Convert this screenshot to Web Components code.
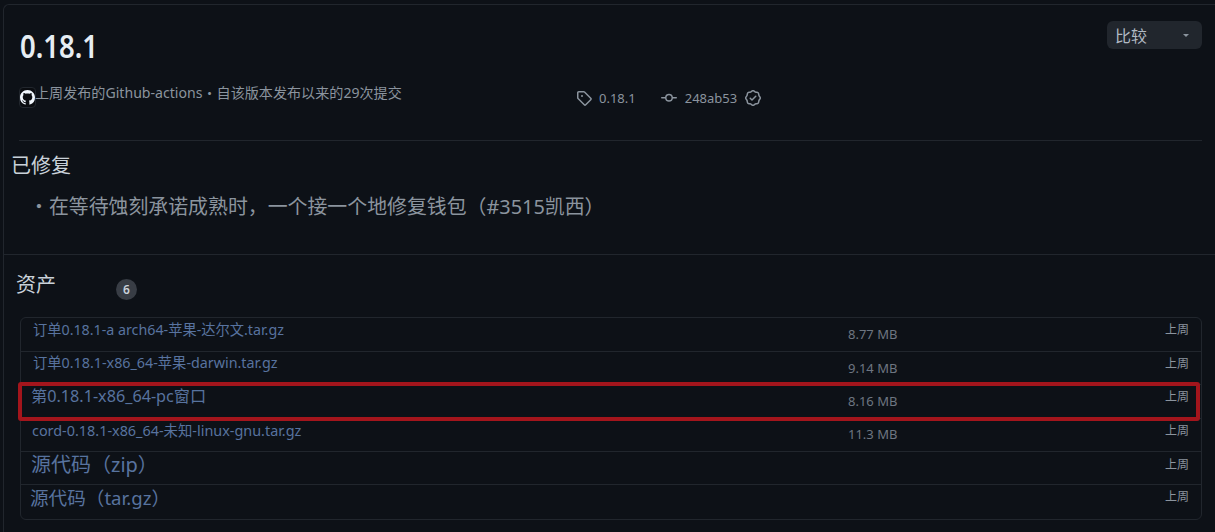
<!DOCTYPE html>
<html lang="zh">
<head>
<meta charset="utf-8">
<title>0.18.1</title>
<style>
  html, body { margin: 0; background: #0d1117; }
  body {
    padding: 4px 0 0 3px;
    height: 532px;
    overflow: hidden;
    box-sizing: border-box;
    font-family: "Noto Sans", "Noto Sans CJK SC", sans-serif;
    color: #c9d1d9;
  }
</style>
</head>
<body>
<release-card>
  <release-header></release-header>
  <release-notes></release-notes>
  <asset-list count="6">
    <asset-row name="订单0.18.1-a arch64-苹果-达尔文.tar.gz" size="8.77 MB" left="12" lift="5" when-lift="5" font="14.25"></asset-row>
    <asset-row name="订单0.18.1-x86_64-苹果-darwin.tar.gz" size="9.14 MB" left="12" lift="5" when-lift="4" font="14.3"></asset-row>
    <asset-row name="第0.18.1-x86_64-pc窗口" size="8.16 MB" left="10" lift="5" when-lift="4" font="16.2" marked></asset-row>
    <asset-row name="cord-0.18.1-x86_64-未知-linux-gnu.tar.gz" size="11.3 MB" left="11" lift="4" when-lift="4" font="14.4"></asset-row>
    <asset-row name="源代码（zip）" left="10" lift="3" when-lift="3" font="20"></asset-row>
    <asset-row name="源代码（tar.gz）" left="9" lift="3" when-lift="4" font="18.6"></asset-row>
  </asset-list>
</release-card>

<script>
const FONT = `"Noto Sans", "Noto Sans CJK SC", sans-serif`;

class ReleaseCard extends HTMLElement {
    constructor() {
        super();
        this.attachShadow({ mode: "open" });
        this.shadowRoot.innerHTML = /*html*/`
      <style>
        :host {
          display: block;
          height: 528px;
          box-sizing: border-box;
          border: 1px solid #21262d;
          border-right: 0;
          border-bottom: 0;
          border-top-left-radius: 6px;
          background: #0d1117;
          font-family: ${FONT};
        }
      </style>
      <slot></slot>
    `;
    }
}
customElements.define("release-card", ReleaseCard);

class ReleaseHeader extends HTMLElement {
    constructor() {
        super();
        this.attachShadow({ mode: "open" });
        this.shadowRoot.innerHTML = /*html*/`
      <style>
        :host {
          display: block;
          height: 135px;
          margin-left: 15px;
          margin-right: 13px;
          border-bottom: 1px solid #21262d;
        }
        .top {
          display: flex;
          justify-content: space-between;
          align-items: flex-start;
          padding-top: 20px;
        }
        h1 {
          margin: -1px 0 1px 1px;
          font-size: 27.5px;
          line-height: 44px;
          font-weight: 600;
          color: #e6edf3;
          transform: scaleY(1.15);
        }
        .compare {
          display: flex;
          justify-content: space-between;
          align-items: center;
          width: 95px;
          height: 28px;
          margin-top: -4px;
          padding: 0 13px 0 8px;
          box-sizing: border-box;
          border-radius: 6px;
          background: #21262d;
          color: #b1bac4;
          font-size: 16px;
        }
        .caret {
          width: 0; height: 0;
          border: 3.5px solid transparent;
          border-top-color: #8b949e;
          border-bottom: 0;
        }
        .meta {
          display: flex;
          align-items: center;
          margin-top: 11px;
          height: 36px;
          font-size: 14px;
          color: #8b949e;
        }
        .who {
          display: flex;
          align-items: flex-start;
          width: 557px;
          flex: none;
        }
        .who span { margin-top: -5px; margin-left: -1px; font-size: 14.1px; line-height: 20px; white-space: nowrap; }
        .avatar {
          flex: none;
          width: 17px;
          height: 21px;
          box-sizing: border-box;
          border: 1px solid #21262d;
          border-radius: 4px;
          margin-top: -1px;
          display: flex;
          align-items: center;
          justify-content: center;
          background: #0a0c10;
        }
        .avatar svg { fill: #f0f6fc; }
        .tags {
          display: flex;
          align-items: center;
          font-size: 13px;
          color: #8b949e;
        }
        .tags svg { flex: none; fill: #8b949e; }
      </style>
      <div class="top">
        <h1>0.18.1</h1>
        <div class="compare">比较<i class="caret"></i></div>
      </div>
      <div class="meta">
        <div class="who">
          <div class="avatar">
            <svg width="15" height="15" viewBox="0 0 16 16"><path d="M8 0c4.42 0 8 3.58 8 8a8.013 8.013 0 0 1-5.45 7.59c-.4.08-.55-.17-.55-.38 0-.27.01-1.13.01-2.2 0-.75-.25-1.23-.54-1.48 1.78-.2 3.65-.88 3.65-3.95 0-.88-.31-1.59-.82-2.15.08-.2.36-1.02-.08-2.12 0 0-.67-.22-2.2.82-.64-.18-1.32-.27-2-.27-.68 0-1.36.09-2 .27-1.53-1.03-2.2-.82-2.2-.82-.44 1.1-.16 1.92-.08 2.12-.51.56-.82 1.28-.82 2.15 0 3.06 1.86 3.75 3.64 3.95-.23.2-.44.55-.51 1.07-.46.21-1.61.55-2.33-.66-.15-.24-.6-.83-1.23-.82-.67.01-.27.38.01.53.34.19.73.9.82 1.13.16.45.68 1.31 2.69.94 0 .67.01 1.3.01 1.49 0 .21-.15.45-.55.38A7.995 7.995 0 0 1 0 8c0-4.42 3.58-8 8-8Z"/></svg>
          </div>
          <span>上周发布的Github-actions・自该版本发布以来的29次提交</span>
        </div>
        <div class="tags">
          <svg width="16" height="16" viewBox="0 0 16 16" style="margin-right:7px"><path d="M1 7.775V2.75C1 1.784 1.784 1 2.75 1h5.025c.464 0 .91.184 1.238.513l6.25 6.25a1.75 1.75 0 0 1 0 2.474l-5.026 5.026a1.75 1.75 0 0 1-2.474 0l-6.25-6.25A1.75 1.75 0 0 1 1 7.775Zm1.5 0c0 .066.026.13.073.177l6.25 6.25a.25.25 0 0 0 .354 0l5.025-5.025a.25.25 0 0 0 0-.354l-6.25-6.25a.25.25 0 0 0-.177-.073H2.75a.25.25 0 0 0-.25.25ZM6 5a1 1 0 1 1 0 2 1 1 0 0 1 0-2Z"/></svg>
          <span>0.18.1</span>
          <svg width="16" height="16" viewBox="0 0 16 16" style="margin:0 8px 0 25px"><path d="M11.93 8.5a4.002 4.002 0 0 1-7.86 0H.75a.75.75 0 0 1 0-1.5h3.32a4.002 4.002 0 0 1 7.86 0h3.32a.75.75 0 0 1 0 1.5Zm-1.43-.75a2.5 2.5 0 1 0-5 0 2.5 2.5 0 0 0 5 0Z"/></svg>
          <span>248ab53</span>
          <svg width="16" height="16" viewBox="0 0 16 16" style="margin-left:8px"><path d="M9.585.52a2.678 2.678 0 0 0-3.17 0l-.928.68a1.178 1.178 0 0 1-.518.215L3.83 1.59a2.678 2.678 0 0 0-2.24 2.24l-.175 1.14a1.178 1.178 0 0 1-.215.518l-.68.928a2.678 2.678 0 0 0 0 3.17l.68.928c.113.153.186.33.215.518l.175 1.138a2.678 2.678 0 0 0 2.24 2.24l1.138.175c.187.029.365.102.518.215l.928.68a2.678 2.678 0 0 0 3.17 0l.928-.68a1.17 1.17 0 0 1 .518-.215l1.138-.175a2.678 2.678 0 0 0 2.241-2.241l.175-1.138c.029-.187.102-.365.215-.518l.68-.928a2.678 2.678 0 0 0 0-3.17l-.68-.928a1.179 1.179 0 0 1-.215-.518L14.41 3.83a2.678 2.678 0 0 0-2.24-2.24l-1.138-.175a1.179 1.179 0 0 1-.518-.215ZM7.303 1.728c.415-.305.98-.305 1.394 0l.928.68c.348.256.752.423 1.18.489l1.136.174c.51.078.909.478.987.987l.174 1.137c.066.427.233.831.489 1.18l.68.927c.305.415.305.98 0 1.394l-.68.928a2.678 2.678 0 0 0-.489 1.18l-.174 1.136a1.178 1.178 0 0 1-.987.987l-1.137.174a2.678 2.678 0 0 0-1.18.489l-.927.68c-.415.305-.98.305-1.394 0l-.928-.68a2.678 2.678 0 0 0-1.18-.489l-1.136-.174a1.178 1.178 0 0 1-.987-.987l-.174-1.137a2.678 2.678 0 0 0-.489-1.18l-.68-.927a1.178 1.178 0 0 1 0-1.394l.68-.928c.256-.348.423-.752.489-1.18l.174-1.136c.078-.51.478-.909.987-.987l1.137-.174a2.678 2.678 0 0 0 1.18-.489ZM11.28 6.78a.75.75 0 0 0-1.06-1.06L7 8.94 5.78 7.72a.75.75 0 0 0-1.06 1.06l1.75 1.75a.75.75 0 0 0 1.06 0Z"/></svg>
        </div>
      </div>
    `;
    }
}
customElements.define("release-header", ReleaseHeader);

class ReleaseNotes extends HTMLElement {
    constructor() {
        super();
        this.attachShadow({ mode: "open" });
        this.shadowRoot.innerHTML = /*html*/`
      <style>
        :host {
          display: block;
          height: 103px;
          padding: 10px 0 0 7px;
          border-bottom: 1px solid #21262d;
        }
        h2 {
          margin: 0;
          font-size: 20px;
          line-height: 30px;
          font-weight: 400;
          color: #c9d1d9;
        }
        p {
          margin: 12px 0 0 18px;
          font-size: 19.9px;
          line-height: 28px;
          color: #8b949e;
          white-space: nowrap;
        }
      </style>
      <h2>已修复</h2>
      <p>・在等待蚀刻承诺成熟时，一个接一个地修复钱包（#3515凯西）</p>
    `;
    }
}
customElements.define("release-notes", ReleaseNotes);

class AssetList extends HTMLElement {
    constructor() {
        super();
        this.attachShadow({ mode: "open" });
        this.shadowRoot.innerHTML = /*html*/`
      <style>
        :host {
          display: block;
          padding: 14px 0 0 16px;
        }
        .title {
          display: flex;
          align-items: center;
          height: 33px;
          margin-left: -4px;
          color: #c9d1d9;
          font-size: 20px;
        }
        .title span { margin-top: -4px; }
        .count {
          width: 21px;
          height: 21px;
          margin-top: 8px;
          margin-left: 60px;
          border-radius: 50%;
          background: #383d45;
          color: #c9d1d9;
          font-size: 12px;
          font-weight: 600;
          text-align: center;
          line-height: 21px;
        }
        .box {
          width: 1182px;
          height: 203px;
          margin-top: 15px;
          box-sizing: border-box;
          border: 1px solid #21262d;
          border-radius: 6px;
        }
      </style>
      <div class="title"><span>资产</span><div class="count"></div></div>
      <div class="box"><slot></slot></div>
    `;
    }

    connectedCallback() {
        this.shadowRoot.querySelector(".count").textContent = this.getAttribute("count");
    }
}
customElements.define("asset-list", AssetList);

class AssetRow extends HTMLElement {
    constructor() {
        super();
        this.attachShadow({ mode: "open" });
        this.shadowRoot.innerHTML = /*html*/`
      <style>
        :host {
          display: block;
          position: relative;
          height: 33.2px;
          box-sizing: border-box;
          border-top: 1px solid #21262d;
        }
        :host(:first-child) { border-top: 0; }
        .row {
          display: grid;
          grid-template-columns: 827px 1fr auto;
          grid-template-rows: 100%;
          align-items: center;
          height: 100%;
          padding-right: 12px;
        }
        .name {
          color: #58739f;
          line-height: 20px;
          white-space: nowrap;
        }
        .size { color: #6e7681; font-size: 13px; line-height: 18px; margin-bottom: 1px; }
        .when { color: #8b949e; font-size: 12px; line-height: 18px; }
        .mark {
          position: absolute;
          left: -3px;
          right: 1px;
          top: -3px;
          height: 39px;
          box-sizing: border-box;
          border: 4px solid #a3151c;
          border-radius: 3px;
          pointer-events: none;
          display: none;
          z-index: 1;
        }
        :host([marked]) .mark { display: block; }
      </style>
      <div class="row">
        <div class="name"></div>
        <div class="size"></div>
        <div class="when">上周</div>
      </div>
      <div class="mark"></div>
    `;
    }

    connectedCallback() {
        const name = this.shadowRoot.querySelector(".name");
        name.textContent = this.getAttribute("name");
        name.style.paddingLeft = this.getAttribute("left") + "px";
        name.style.fontSize = this.getAttribute("font") + "px";
        // 网格里居中，下边距加倍就等于往上挪
        name.style.marginBottom = (this.getAttribute("lift") * 2) + "px";
        this.shadowRoot.querySelector(".when").style.marginBottom = (this.getAttribute("when-lift") * 2) + "px";
        this.shadowRoot.querySelector(".size").textContent = this.getAttribute("size") || "";
    }
}
customElements.define("asset-row", AssetRow);
</script>
</body>
</html>
